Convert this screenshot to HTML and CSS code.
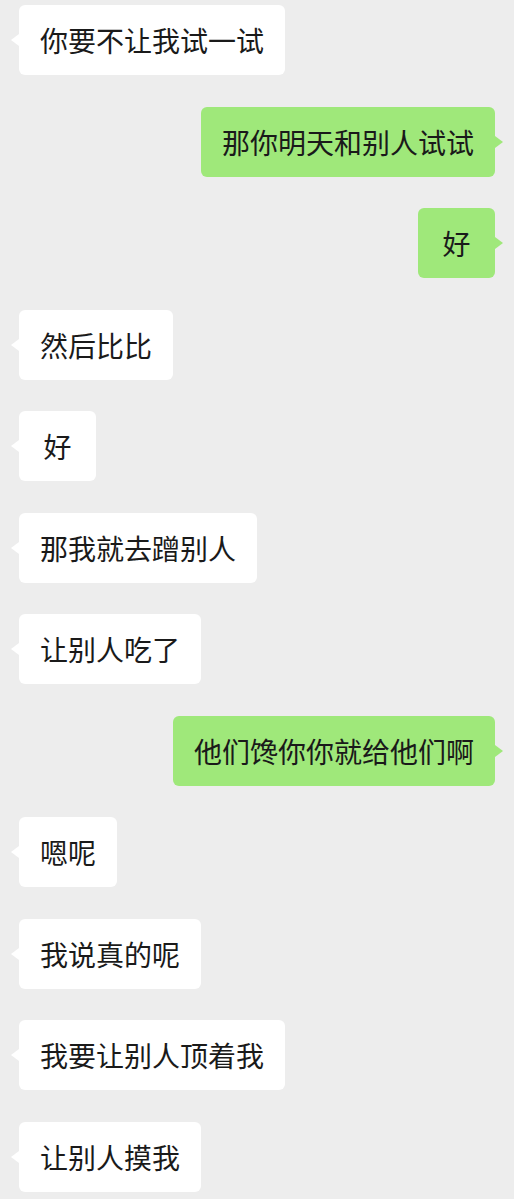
FILE: index.html
```html
<!DOCTYPE html>
<html lang="zh-CN">
<head>
    <meta charset="UTF-8">
    <meta name="viewport" content="width=device-width, initial-scale=1.0">
    <title>聊天</title>
    <link rel="stylesheet" href="styles.css">
</head>
<body>

    <div class="chat">
        <div class="msg msg-left"><div class="bubble">你要不让我试一试</div></div>
        <div class="msg msg-right"><div class="bubble">那你明天和别人试试</div></div>
        <div class="msg msg-right"><div class="bubble">好</div></div>
        <div class="msg msg-left"><div class="bubble">然后比比</div></div>
        <div class="msg msg-left"><div class="bubble">好</div></div>
        <div class="msg msg-left"><div class="bubble">那我就去蹭别人</div></div>
        <div class="msg msg-left"><div class="bubble">让别人吃了</div></div>
        <div class="msg msg-right"><div class="bubble">他们馋你你就给他们啊</div></div>
        <div class="msg msg-left"><div class="bubble">嗯呢</div></div>
        <div class="msg msg-left"><div class="bubble">我说真的呢</div></div>
        <div class="msg msg-left"><div class="bubble">我要让别人顶着我</div></div>
        <div class="msg msg-left"><div class="bubble">让别人摸我</div></div>
    </div>

</body>
</html>
```

FILE: styles.css
```css
/* --- General Setup --- */
:root {
    --bg-color: #ededed;
    --left-bubble: #ffffff;
    --right-bubble: #9fe87a;
    --text-color: #1a1a1a;
}

body {
    margin: 0;
    background-color: var(--bg-color);
    font-family: "Noto Sans CJK SC", "Noto Sans", sans-serif;
    color: var(--text-color);
}

/* --- Chat List --- */
.chat {
    display: flex;
    flex-direction: column;
    gap: 31.5px;
    padding: 5px 19px 8px 19px;
}

.msg {
    display: flex;
}

.msg-left {
    justify-content: flex-start;
}

.msg-right {
    justify-content: flex-end;
}

/* --- Bubbles --- */
.bubble {
    position: relative;
    font-size: 28px;
    line-height: 40px;
    padding: 15px 21px;
    min-width: 35px;
    text-align: center;
    border-radius: 6px;
    white-space: nowrap;
}

.msg-left .bubble {
    background-color: var(--left-bubble);
}

.msg-right .bubble {
    background-color: var(--right-bubble);
}

/* little tail pointing at the speaker */
.bubble::before {
    content: "";
    position: absolute;
    top: 50%;
    margin-top: -6px;
    border-top: 6px solid transparent;
    border-bottom: 6px solid transparent;
}

.msg-left .bubble::before {
    left: -8px;
    border-right: 8px solid var(--left-bubble);
}

.msg-right .bubble::before {
    right: -8px;
    border-left: 8px solid var(--right-bubble);
}
```
